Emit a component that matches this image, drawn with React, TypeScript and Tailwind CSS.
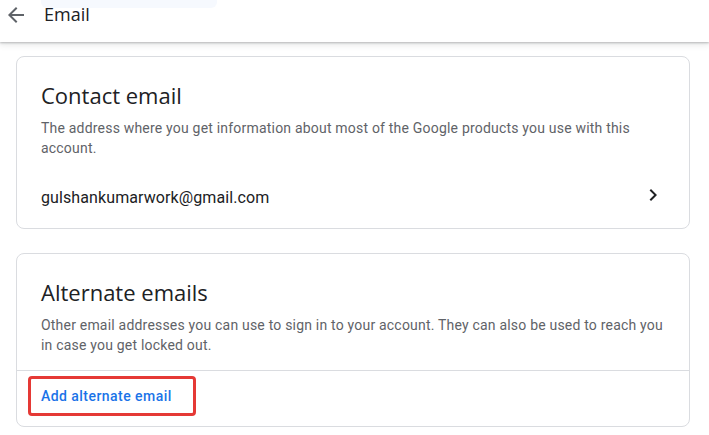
import React from "react";

const ARROW_BACK = "M20 11H7.83l5.59-5.59L12 4l-8 8 8 8 1.41-1.41L7.83 13H20v-2z";
const CHEVRON_RIGHT = "M10 6L8.59 7.41 13.17 12l-4.58 4.59L10 18l6-6z";

function Icon({ d, className }: { d: string; className?: string }) {
  return (
    <svg viewBox="0 0 24 24" width="24" height="24" className={className} fill="currentColor">
      <path d={d} />
    </svg>
  );
}

// card wrapper used by both sections
function Card({ children }: { children: React.ReactNode }) {
  return (
    <section className="rounded-lg border border-[#dadce0] bg-white">{children}</section>
  );
}

function CardHead({ title, text }: { title: string; text: string }) {
  return (
    <div className="px-6 pt-6">
      <h2 className="font-['Open_Sans',sans-serif] text-[22px] leading-7 text-[#202124]">{title}</h2>
      <p className="mt-[9px] text-sm leading-5 tracking-[0.2px] text-[#5f6368]">{text}</p>
    </div>
  );
}

export default function App() {
  return (
    <div className="min-h-[435px] w-[709px] bg-white font-['Roboto',sans-serif]">
      <header className="relative flex h-[42px] items-start bg-white shadow-[0_1px_2px_0_rgba(60,64,67,0.3),0_2px_6px_1px_rgba(60,64,67,0.12)]">
        <div className="absolute left-[41px] top-0 h-2 w-[176px] rounded-b-md bg-[#f6f9fe]" />
        <button type="button" title="Back" className="ml-1 mt-[3px] text-[#5f6368]">
          <Icon d={ARROW_BACK} />
        </button>
        <h1 className="ml-4 mt-[2px] font-['Open_Sans',sans-serif] text-lg leading-6 text-[#202124]">Email</h1>
      </header>

      <main className="flex flex-col gap-[24px] pl-4 pr-[19px] pt-[14px]">
        <Card>
          <CardHead
            title="Contact email"
            text="The address where you get information about most of the Google products you use with this account."
          />
          <div className="flex items-center justify-between px-6 pb-[6px] pt-4">
            <span className="text-base leading-[48px] tracking-[0.1px] text-[#202124]">gulshankumarwork@gmail.com</span>
            <Icon d={CHEVRON_RIGHT} className="-mt-[6px] text-[#202124]" />
          </div>
        </Card>

        <Card>
          <CardHead
            title="Alternate emails"
            text="Other email addresses you can use to sign in to your account. They can also be used to reach you in case you get locked out."
          />
          <div className="mt-[15px] border-t border-[#dadce0] pb-[10px] pl-[11px] pt-[5px]">
            <div className="flex h-[40px] w-[168px] items-center rounded-[4px] border-[3px] border-[#e53935] pl-[10px]">
              <a href="#" className="text-sm font-medium leading-5 tracking-[0.45px] text-[#1a73e8]">
                Add alternate email
              </a>
            </div>
          </div>
        </Card>
      </main>
    </div>
  );
}
